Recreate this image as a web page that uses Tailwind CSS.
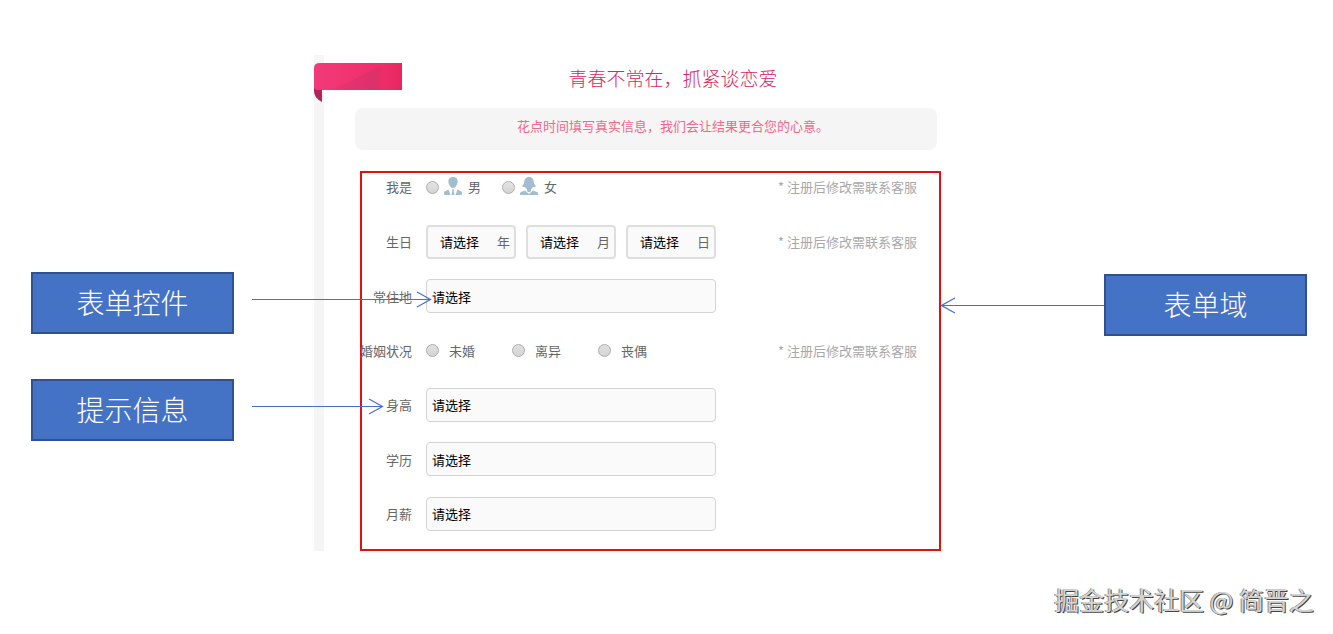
<!DOCTYPE html>
<html lang="zh-CN">

<head>
    <meta charset="UTF-8">
    <meta name="viewport" content="width=device-width, initial-scale=1.0">
    <title>表单的组成</title>
    <script src="https://cdn.jsdelivr.net/npm/@tailwindcss/browser@4"></script>
</head>

<body class="min-h-screen flex flex-col bg-white font-['Noto_Sans_CJK_SC',sans-serif] text-[13px] text-[#666]">
    <main class="flex-1 flex pt-[55px] pl-[31px] pr-[26px]">
        <!-- Left callouts -->
        <aside class="shrink-0 w-[203px] pt-[217px] flex flex-col gap-[45px]">
            <div class="relative h-[62px] pb-[2px] flex items-center justify-center border-2 border-[#2f528f] bg-[#4472c4] text-[28px] font-light text-white">
                表单控件
                <svg class="absolute z-10 left-[219px] top-[17px]" width="180" height="18" fill="none" stroke="#4472c4" stroke-width="1.2">
                    <path d="M0 8.5H178M165 1L178.5 8.5L165 16" />
                </svg>
            </div>
            <div class="relative h-[62px] pb-[2px] flex items-center justify-center border-2 border-[#2f528f] bg-[#4472c4] text-[28px] font-light text-white">
                提示信息
                <svg class="absolute z-10 left-[219px] top-[17px]" width="132" height="18" fill="none" stroke="#4472c4" stroke-width="1.2">
                    <path d="M0 8.5H130M117 1L130.5 8.5L117 16" />
                </svg>
            </div>
        </aside>

        <!-- Registration page -->
        <section class="relative flex-1 min-w-0 ml-20 mr-[163px] flex flex-col border-l-[10px] border-[#f5f5f5]">
            <svg class="absolute -left-[10px] top-2" width="88" height="40" viewBox="0 0 88 40">
                <defs>
                    <linearGradient id="ribbon" x1="0" x2="1">
                        <stop offset="0" stop-color="#f13a78" />
                        <stop offset="1" stop-color="#ee2a68" />
                    </linearGradient>
                    <linearGradient id="shade" x1="0" x2="1">
                        <stop offset="0" stop-color="#e83571" />
                        <stop offset="0.6" stop-color="#dc3069" />
                        <stop offset="0.75" stop-color="#ee2d69" />
                        <stop offset="1" stop-color="#e6265d" />
                    </linearGradient>
                </defs>
                <path d="M0 26V5Q0 0 6 0H88V27H3Q0 27 0 29Z" fill="url(#ribbon)" />
                <path d="M19 27L72 0H88V27Z" fill="url(#shade)" />
                <path d="M0 25Q1 27 5 27H8V39Q0 35 0 28Z" fill="#b3245a" />
            </svg>

            <h1 class="ml-[31px] mr-1 pl-[54px] pt-[9px] pb-4 text-center text-[19px] leading-7 font-light text-[#d9265f]">青春不常在，抓紧谈恋爱</h1>
            <p class="ml-[31px] mr-1 pl-[54px] h-[42px] leading-9 rounded-lg bg-[#f5f5f5] text-center text-[#ee6a88]">花点时间填写真实信息，我们会让结果更合您的心意。</p>

            <form class="flex-1 flex flex-col ml-9 mt-[21px] pr-[22px] pb-2 border-2 border-[#e60f0f]">
                <div class="flex items-center gap-[14px] h-7 mb-[14px]">
                    <span class="w-[50px] text-right">我是</span>
                    <div class="flex gap-[21px]">
                        <label class="flex items-center">
                            <input type="radio" name="gender" class="appearance-none size-[13px] mr-[5px] rounded-full border border-[#adadad] bg-linear-to-b from-[#e4e4e4] to-[#d4d4d4]">
                            <svg class="mr-[6px] mb-[2px]" width="18" height="18" viewBox="0 0 18 18" fill="#a3bdd0">
                                <path d="M9 0C12 0 13.8 2 13.6 4.8C13.4 7.8 11.5 11 9 11S4.600 7.800 4.400 4.800C4.200 2 6 0 9 0Z" />
                                <path d="M4.500 12.500L6.500 18H1Q0 18 0 17V16Q0 14.300 2 13.700ZM13.500 12.500L11.500 18H17Q18 18 18 17V16Q18 14.300 16 13.700ZM8 12.500H10L9.700 14L10.500 18H7.500L8.300 14Z" />
                            </svg>
                            男
                        </label>
                        <label class="flex items-center">
                            <input type="radio" name="gender" class="appearance-none size-[13px] mr-[5px] rounded-full border border-[#adadad] bg-linear-to-b from-[#e4e4e4] to-[#d4d4d4]">
                            <svg class="mr-[6px] mb-[2px]" width="18" height="18" viewBox="0 0 18 18" fill="#a3bdd0">
                                <path d="M9 0C12 0 13.800 2 14 6.500L15.800 9Q16 10 14.500 10H13C12.300 11.300 11.500 12 11 12.300V14Q9 16.500 7 14V12.300C6.500 12 5.700 11.300 5 10H3.500Q2 10 2.200 9L4 6.500C4.200 2 6 0 9 0Z" />
                                <path d="M5 13.500L9 17L13 13.500L17 15Q18 15.500 18 16.500V18H0V16.500Q0 15.500 1 15Z" />
                            </svg>
                            女
                        </label>
                    </div>
                    <span class="ml-auto text-[#a8a8a8]">* 注册后修改需联系客服</span>
                </div>

                <div class="flex-1 grid auto-rows-fr">
                    <div class="flex items-center gap-[14px]">
                        <span class="w-[50px] text-right">生日</span>
                        <div class="flex gap-[10px] w-[290px]">
                            <div class="relative flex-1">
                                <select id="year" class="appearance-none w-full h-[34px] pl-3 pb-px rounded border-2 border-[#dedede] bg-[#fafafa] text-black">
                                    <option>请选择</option>
                                </select>
                                <label for="year" class="absolute right-[6px] top-0 leading-[34px]">年</label>
                            </div>
                            <div class="relative flex-1">
                                <select id="month" class="appearance-none w-full h-[34px] pl-3 pb-px rounded border-2 border-[#dedede] bg-[#fafafa] text-black">
                                    <option>请选择</option>
                                </select>
                                <label for="month" class="absolute right-[6px] top-0 leading-[34px]">月</label>
                            </div>
                            <div class="relative flex-1">
                                <select id="day" class="appearance-none w-full h-[34px] pl-3 pb-px rounded border-2 border-[#dedede] bg-[#fafafa] text-black">
                                    <option>请选择</option>
                                </select>
                                <label for="day" class="absolute right-[6px] top-0 leading-[34px]">日</label>
                            </div>
                        </div>
                        <span class="ml-auto text-[#a8a8a8]">* 注册后修改需联系客服</span>
                    </div>

                    <div class="flex items-center gap-[14px]">
                        <label for="city" class="w-[50px] text-right">常住地</label>
                        <select id="city" class="appearance-none w-[290px] h-[34px] pl-[5px] rounded border border-[#d4d4d4] bg-[#fafafa] text-black">
                            <option>请选择</option>
                        </select>
                    </div>

                    <div class="flex items-center gap-[14px]">
                        <span class="w-[50px] flex justify-end whitespace-nowrap">婚姻状况</span>
                        <div class="flex gap-[37px]">
                            <label class="flex items-center gap-[10px]">
                                <input type="radio" name="marriage" class="appearance-none size-[13px] rounded-full border border-[#adadad] bg-linear-to-b from-[#e0e0e0] to-[#d4d4d4]">
                                未婚
                            </label>
                            <label class="flex items-center gap-[10px]">
                                <input type="radio" name="marriage" class="appearance-none size-[13px] rounded-full border border-[#adadad] bg-linear-to-b from-[#e0e0e0] to-[#d4d4d4]">
                                离异
                            </label>
                            <label class="flex items-center gap-[10px]">
                                <input type="radio" name="marriage" class="appearance-none size-[13px] rounded-full border border-[#adadad] bg-linear-to-b from-[#e0e0e0] to-[#d4d4d4]">
                                丧偶
                            </label>
                        </div>
                        <span class="ml-auto text-[#a8a8a8]">* 注册后修改需联系客服</span>
                    </div>

                    <div class="flex items-center gap-[14px]">
                        <label for="height" class="w-[50px] text-right">身高</label>
                        <select id="height" class="appearance-none w-[290px] h-[34px] pl-[5px] rounded border border-[#d4d4d4] bg-[#fafafa] text-black">
                            <option>请选择</option>
                        </select>
                    </div>

                    <div class="flex items-center gap-[14px]">
                        <label for="education" class="w-[50px] text-right">学历</label>
                        <select id="education" class="appearance-none w-[290px] h-[34px] pl-[5px] rounded border border-[#d4d4d4] bg-[#fafafa] text-black">
                            <option>请选择</option>
                        </select>
                    </div>

                    <div class="flex items-center gap-[14px]">
                        <label for="salary" class="w-[50px] text-right">月薪</label>
                        <select id="salary" class="appearance-none w-[290px] h-[34px] pl-[5px] rounded border border-[#d4d4d4] bg-[#fafafa] text-black">
                            <option>请选择</option>
                        </select>
                    </div>
                </div>
            </form>
        </section>

        <!-- Right callout -->
        <aside class="shrink-0 w-[203px] pt-[219px]">
            <div class="relative h-[62px] pb-[2px] flex items-center justify-center border-2 border-[#2f528f] bg-[#4472c4] text-[28px] font-light text-white">
                表单域
                <svg class="absolute right-full mr-[2px] top-5" width="163" height="18" fill="none" stroke="#4472c4" stroke-width="1.2">
                    <path d="M163 9.5H1M14 2L0.5 9.5L14 17" />
                </svg>
            </div>
        </aside>
    </main>

    <footer class="pt-[29px] pb-4 pr-[19px] text-right text-[25px] leading-[38px] text-[#d4d4d4] [text-shadow:-1px_0_0_#888,1px_1px_0_#444]">掘金技术社区 @ 简晋之</footer>
</body>

</html>
